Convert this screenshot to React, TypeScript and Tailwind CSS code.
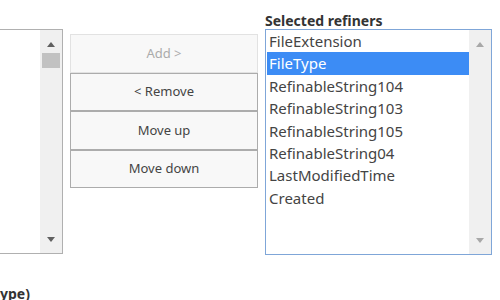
import React from "react";

const refiners = [
  "FileExtension",
  "FileType",
  "RefinableString104",
  "RefinableString103",
  "RefinableString105",
  "RefinableString04",
  "LastModifiedTime",
  "Created",
];

const Arrow: React.FC<{ down?: boolean; color: string }> = ({ down, color }) => (
  <svg width="8" height="5" viewBox="0 0 8 5">
    <polygon points={down ? "0,0 8,0 4,5" : "0,5 8,5 4,0"} fill={color} />
  </svg>
);

const ScrollBar: React.FC<{ thumb?: boolean; arrow: string }> = ({ thumb, arrow }) => (
  <div className="w-[22px] h-full bg-[#f0f0f0] flex flex-col items-center">
    <div className="h-[17px] flex items-end">
      <Arrow color={arrow} />
    </div>
    {thumb && <div className="mt-[6px] w-[18px] h-[15px] bg-[#c2c2c2]" />}
    <div className="flex-1" />
    <div className="h-[17px] flex items-start pt-[1px]">
      <Arrow down color={arrow} />
    </div>
  </div>
);

const buttons = [
  { label: "Add >", disabled: true },
  { label: "< Remove" },
  { label: "Move up" },
  { label: "Move down" },
];

export default function App() {
  return (
    <div className="w-[500px] h-[300px] bg-white overflow-hidden font-['Noto_Sans',sans-serif] text-[#444]">
      <div className="flex items-start">
        <div className="ml-[-100px] mt-[29px] w-[163px] h-[225px] border border-[#b0b0b0] flex justify-end">
          <ScrollBar thumb arrow="#606060" />
        </div>

        <div className="ml-[7px] mt-[34px] w-[188px] flex flex-col">
          {buttons.map((b) => (
            <button
              key={b.label}
              disabled={b.disabled}
              className={
                "h-[38.5px] bg-[#f8f8f8] border text-[13px] " +
                (b.disabled
                  ? "border-[#e2e2e2] text-[#ababab]"
                  : "border-[#acacac] text-[#444]")
              }
            >
              {b.label}
            </button>
          ))}
        </div>

        <div className="ml-[7px] w-[227px] flex flex-col">
          <div className="h-[29px] flex items-end pb-[1px] text-[14px] font-bold text-[#333] leading-none">
            Selected refiners
          </div>
          <div className="h-[226px] border border-[#7fa6d8] flex">
            <div className="flex-1 pl-[1px] pt-[0px]">
              {refiners.map((r, i) => (
                <div
                  key={r}
                  className={
                    "h-[22.4px] leading-[22.4px] pl-[2px] text-[15px] " +
                    (i === 1 ? "bg-[#3c8cf5] text-white" : "")
                  }
                >
                  {r}
                </div>
              ))}
            </div>
            <ScrollBar arrow="#a8a8a8" />
          </div>
        </div>
      </div>
      <div className="mt-[28px] text-[14px] font-bold text-[#333]">ype)</div>
    </div>
  );
}
